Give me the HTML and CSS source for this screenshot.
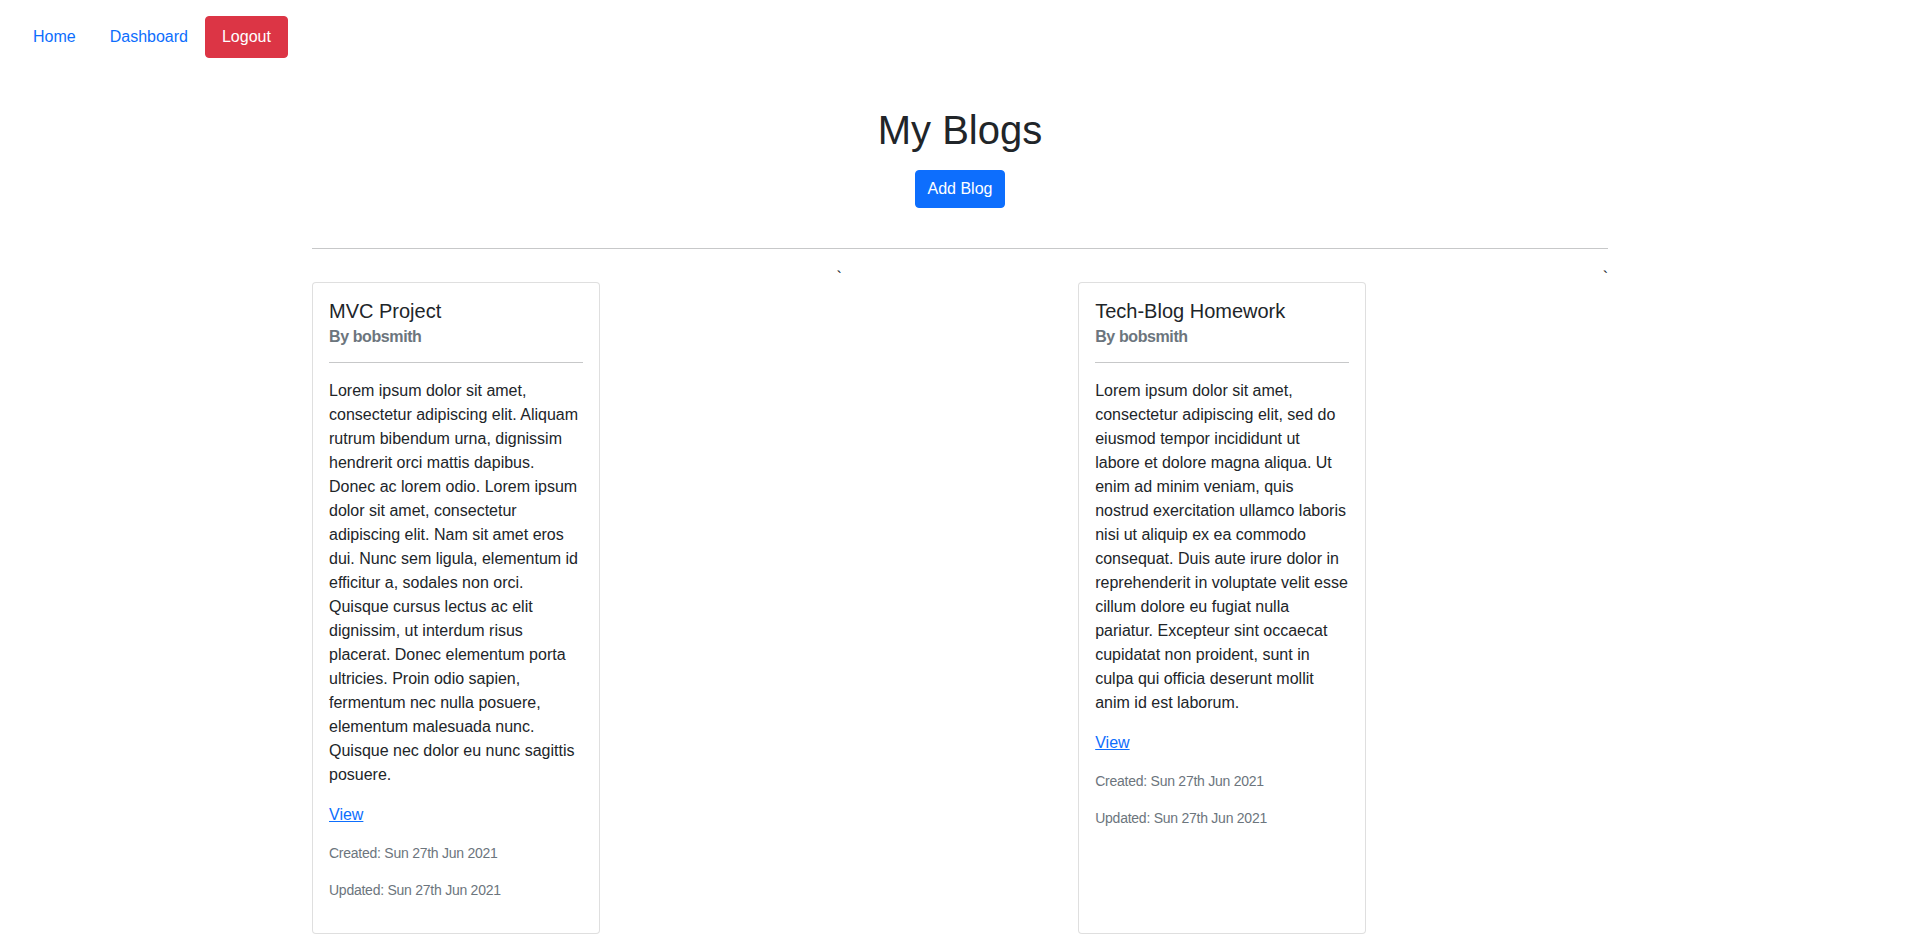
FILE: index.html
```html
<!DOCTYPE html>
<html lang="en">
<head>
<meta charset="utf-8">
<title>My Blogs</title>
<link rel="stylesheet" href="styles.css">
</head>
<body>
<nav class="nav">
  <a class="nav-link" href="#">Home</a>
  <a class="nav-link" href="#">Dashboard</a>
  <a class="nav-link btn-danger" href="#">Logout</a>
</nav>
<main class="container">
  <div class="header">
    <h1 class="page-title">My Blogs</h1>
    <a class="btn btn-primary" href="#">Add Blog</a>
  </div>
  <hr class="rule">
  <div class="cards">
    <div class="card">
      <div class="card-body">
        <h5 class="card-title">MVC Project</h5>
        <h6 class="card-subtitle">By bobsmith</h6>
        <hr class="card-rule">
        <p class="card-text">Lorem ipsum dolor sit amet,<br>consectetur adipiscing elit. Aliquam<br>rutrum bibendum urna, dignissim<br>hendrerit orci mattis dapibus.<br>Donec ac lorem odio. Lorem ipsum<br>dolor sit amet, consectetur<br>adipiscing elit. Nam sit amet eros<br>dui. Nunc sem ligula, elementum id<br>efficitur a, sodales non orci.<br>Quisque cursus lectus ac elit<br>dignissim, ut interdum risus<br>placerat. Donec elementum porta<br>ultricies. Proin odio sapien,<br>fermentum nec nulla posuere,<br>elementum malesuada nunc.<br>Quisque nec dolor eu nunc sagittis<br>posuere.</p>
        <p class="card-text"><a class="card-link" href="#">View</a></p>
        <p class="meta">Created: Sun 27th Jun 2021</p>
        <p class="meta">Updated: Sun 27th Jun 2021</p>
      </div>
    </div>
    `
    <div class="card">
      <div class="card-body">
        <h5 class="card-title">Tech-Blog Homework</h5>
        <h6 class="card-subtitle">By bobsmith</h6>
        <hr class="card-rule">
        <p class="card-text">Lorem ipsum dolor sit amet,<br>consectetur adipiscing elit, sed do<br>eiusmod tempor incididunt ut<br>labore et dolore magna aliqua. Ut<br>enim ad minim veniam, quis<br>nostrud exercitation ullamco laboris<br>nisi ut aliquip ex ea commodo<br>consequat. Duis aute irure dolor in<br>reprehenderit in voluptate velit esse<br>cillum dolore eu fugiat nulla<br>pariatur. Excepteur sint occaecat<br>cupidatat non proident, sunt in<br>culpa qui officia deserunt mollit<br>anim id est laborum.</p>
        <p class="card-text"><a class="card-link" href="#">View</a></p>
        <p class="meta">Created: Sun 27th Jun 2021</p>
        <p class="meta">Updated: Sun 27th Jun 2021</p>
      </div>
    </div>
    `
  </div>
</main>
</body>
</html>
```

FILE: styles.css
```css
* {
  box-sizing: border-box;
}

html, body {
  margin: 0;
  padding: 0;
}

body {
  font-family: "Segoe UI", "Liberation Sans", Arial, sans-serif;
  font-size: 16px;
  line-height: 1.5;
  color: #212529;
  background: #fff;
}

.nav {
  display: flex;
  align-items: center;
  padding: 16px 16px 0;
}

.nav-link {
  display: block;
  padding: 8px 16px;
  border: 1px solid transparent;
  border-radius: 4px;
  color: #0d6efd;
  text-decoration: none;
  line-height: 24px;
}

.btn-danger {
  background: #dc3545;
  border-color: #dc3545;
  color: #fff;
}

.container {
  width: 1320px;
  margin: 0 auto;
  padding: 0 12px;
}

.header {
  display: flex;
  flex-direction: column;
  align-items: center;
  padding-top: 48px;
  padding-bottom: 24px;
}

.page-title {
  margin: 0;
  font-size: 40px;
  font-weight: 400;
  line-height: 48px;
}

.btn {
  display: inline-block;
  margin-top: 16px;
  padding: 6px 12px;
  border: 1px solid transparent;
  border-radius: 4px;
  font-size: 16px;
  line-height: 24px;
  text-decoration: none;
}

.btn-primary {
  background: #0d6efd;
  border-color: #0d6efd;
  color: #fff;
}

.rule,
.card-rule {
  margin: 16px 0;
  border: 0;
  height: 1px;
  background: #212529;
  opacity: 0.25;
}

.rule {
  margin-bottom: 17px;
}

.cards {
  display: flex;
  justify-content: space-between;
}

.card {
  width: 288px;
  margin-top: 16px;
  border: 1px solid rgba(0, 0, 0, 0.125);
  border-radius: 4px;
  background: #fff;
}

.card-body {
  padding: 16px;
}

.card-title {
  margin: 0 0 8px;
  font-size: 20px;
  font-weight: 400;
  line-height: 1.2;
}

.card-subtitle {
  margin: -4px 0 0;
  font-size: 16px;
  font-weight: 700;
  letter-spacing: -0.4px;
  line-height: 1.2;
  color: #6c757d;
}

.card-text {
  margin: 0 0 16px;
  white-space: nowrap;
}

.card-link {
  color: #0d6efd;
  text-decoration: underline;
}

.meta {
  margin: 0 0 16px;
  font-size: 14px;
  letter-spacing: -0.25px;
  line-height: 21px;
  color: #6c757d;
}
```
